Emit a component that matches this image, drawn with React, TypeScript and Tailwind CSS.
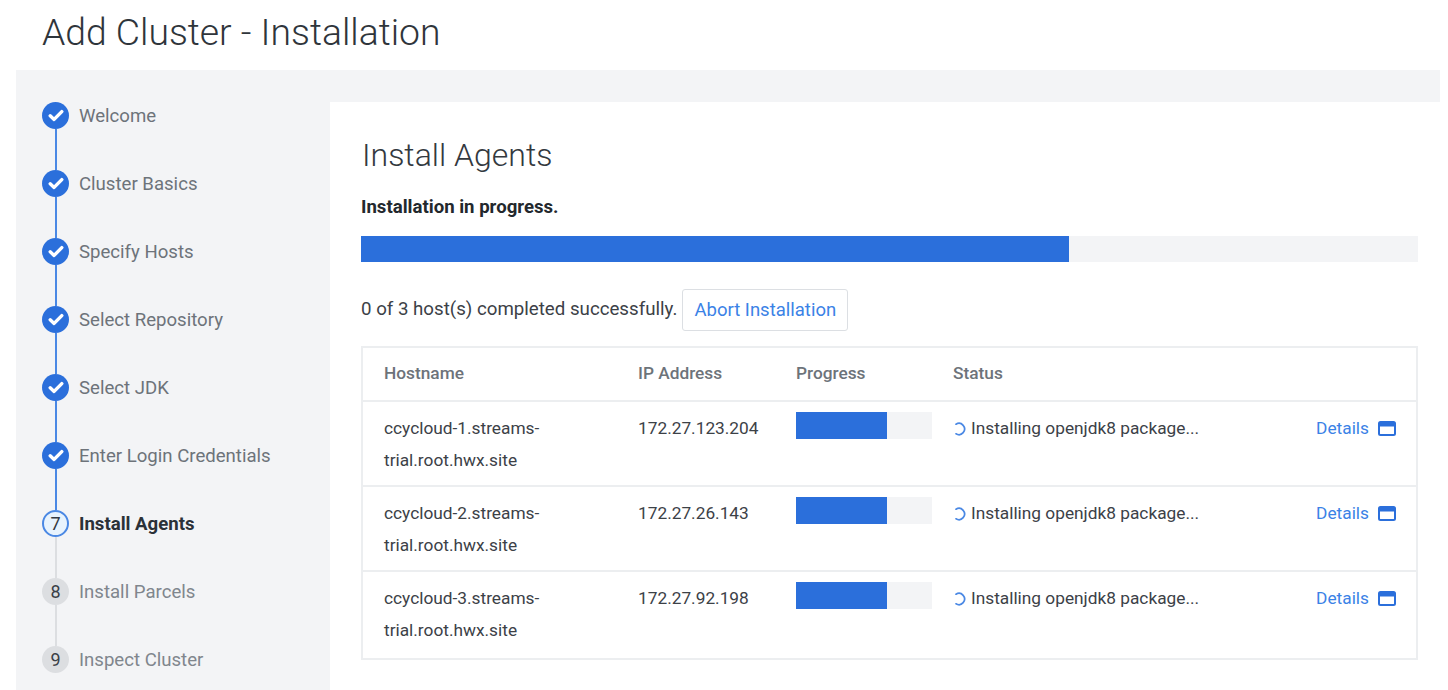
const steps = [
  'Welcome',
  'Cluster Basics',
  'Specify Hosts',
  'Select Repository',
  'Select JDK',
  'Enter Login Credentials',
  'Install Agents',
  'Install Parcels',
  'Inspect Cluster',
];

const hosts = [
  { name: 'ccycloud-1.streams-', rest: 'trial.root.hwx.site', ip: '172.27.123.204' },
  { name: 'ccycloud-2.streams-', rest: 'trial.root.hwx.site', ip: '172.27.26.143' },
  { name: 'ccycloud-3.streams-', rest: 'trial.root.hwx.site', ip: '172.27.92.198' },
];

function StepCircle({ index }: { index: number }) {
  if (index < 6) {
    return (
      <div className="w-[27px] h-[27px] shrink-0 rounded-full bg-[#2b6fdb] flex items-center justify-center">
        <svg width="16" height="13" viewBox="0 0 16 13" fill="none">
          <path d="M2.2 6.8l3.9 3.6L13.8 2.6" stroke="#fff" strokeWidth="3.4" strokeLinecap="round" strokeLinejoin="round" />
        </svg>
      </div>
    );
  }
  if (index === 6) {
    return (
      <div className="w-[27px] h-[27px] shrink-0 rounded-full bg-[#e8f3fd] border-2 border-[#4a88e4] flex items-center justify-center text-[18px] text-[#333a42]">
        7
      </div>
    );
  }
  return (
    <div className="w-[27px] h-[27px] shrink-0 rounded-full bg-[#dcdee1] flex items-center justify-center text-[18px] text-[#3a4047]">
      {index + 1}
    </div>
  );
}

function Stepper() {
  return (
    <div className="w-[314px] shrink-0 pl-[26px] pt-[32px]">
      {steps.map((label, i) => (
        <div key={label} className="flex gap-[10px] h-[68px]">
          <div className="flex flex-col items-center w-[27px]">
            <StepCircle index={i} />
            {i < 8 && (
              <div className={`w-[2px] h-[41px] ${i < 6 ? 'bg-[#4a88e4]' : 'bg-[#dcdee1]'}`} />
            )}
          </div>
          <div
            className={`h-[29px] leading-[29px] text-[18.6px] ${
              i === 6 ? 'font-bold text-[#2b3138]' : i > 6 ? 'text-[#80868d]' : 'text-[#6d737a]'
            }`}
          >
            {label}
          </div>
        </div>
      ))}
    </div>
  );
}

function HostRow({ host, last }: { host: (typeof hosts)[number]; last: boolean }) {
  return (
    <div className={`grid grid-cols-[254px_158px_157px_1fr] pl-[21px] pr-[20px] pt-[10px] text-[17.3px] text-[#3c4147] ${last ? 'h-[86px]' : 'h-[85px] border-b-2 border-[#eceef0]'}`}>
      <div className="leading-[32px]">
        <div>{host.name}</div>
        <div>{host.rest}</div>
      </div>
      <div className="leading-[32px]">{host.ip}</div>
      <div>
        <div className="w-[136px] h-[27px] bg-[#f3f4f6]">
          <div className="w-[91px] h-full bg-[#2b6fdb]" />
        </div>
      </div>
      <div className="flex justify-between h-[33px] items-center">
        <div className="flex items-center gap-[4px]">
          <svg width="14" height="14" viewBox="0 0 14 14" fill="none">
            <path d="M3 2.2A5.6 5.6 0 1 1 3 11.8" stroke="#4a88e4" strokeWidth="1.7" strokeLinecap="round" />
          </svg>
          <span>Installing openjdk8 package...</span>
        </div>
        <div className="flex items-center gap-[9px] text-[#3b82e6]">
          <span className="pt-[1px]">Details</span>
          <svg width="18" height="15" viewBox="0 0 18 15" fill="none">
            <rect x="1" y="1" width="16" height="13" rx="1.5" stroke="#2b6fdb" strokeWidth="2" />
            <rect x="1" y="1" width="16" height="4.5" fill="#2b6fdb" />
          </svg>
        </div>
      </div>
    </div>
  );
}

export default function App() {
  return (
    <div className="w-[1448px] h-[690px] overflow-hidden bg-white font-['Roboto',sans-serif]">
      <h1 className="pl-[42px] h-[70px] pt-[10px] text-[37.3px] leading-[44px] font-light text-[#2f353b]">
        Add Cluster - Installation
      </h1>
      <div className="ml-[16px] w-[1424px] h-[620px] bg-[#f3f4f6] flex">
        <Stepper />
        <div className="flex-1 mt-[32px] bg-white pl-[31px] pr-[22px]">
          <h2 className="ml-[1px] pt-[32px] text-[32px] leading-[42px] font-light text-[#33393f]">Install Agents</h2>
          <div className="mt-[19px] text-[18.6px] leading-[24px] font-bold text-[#23282d]">Installation in progress.</div>
          <div className="mt-[17px] h-[26px] bg-[#f3f4f6]">
            <div className="w-[708px] h-full bg-[#2b6fdb]" />
          </div>
          <div className="mt-[27px] flex items-start gap-[5px]">
            <span className="text-[18.7px] leading-[40px] text-[#3c4147]">0 of 3 host(s) completed successfully.</span>
            <button className="w-[166px] h-[42px] pt-[2px] border border-[#dcdfe3] rounded-[3px] text-[18.5px] text-[#3b82e6] bg-white">
              Abort Installation
            </button>
          </div>
          <div className="mt-[15px] border-2 border-[#eceef0]">
            <div className="grid grid-cols-[254px_158px_157px_1fr] pl-[21px] h-[54px] pb-[1px] items-center border-b-2 border-[#eceef0] text-[17.3px] font-medium text-[#6d737a]">
              <div>Hostname</div>
              <div>IP Address</div>
              <div>Progress</div>
              <div>Status</div>
            </div>
            {hosts.map((host, i) => (
              <HostRow key={host.ip} host={host} last={i === hosts.length - 1} />
            ))}
          </div>
        </div>
      </div>
    </div>
  );
}
